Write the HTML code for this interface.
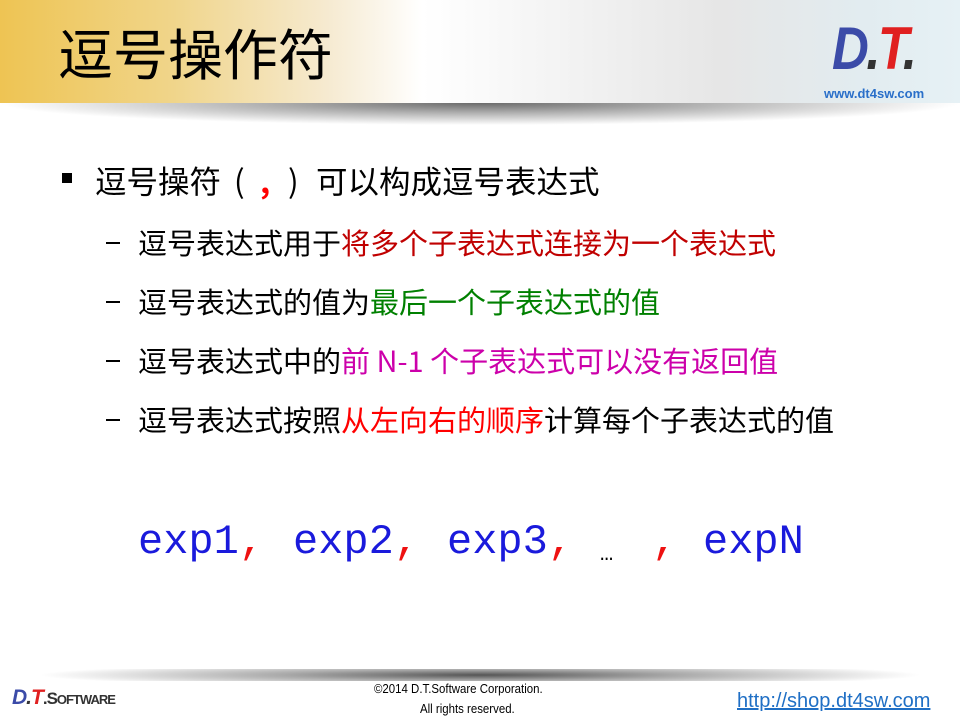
<!DOCTYPE html>
<html><head><meta charset="utf-8"><style>
*{margin:0;padding:0}
body{width:960px;height:720px;position:relative;background:#fff;overflow:hidden;font-family:"Liberation Sans","Noto Sans CJK SC",sans-serif}
.hdr{position:absolute;left:0;top:0;width:960px;height:103px;background:linear-gradient(90deg,#eec453 0%,#f0d58a 18%,#f6ead0 34%,#fff 44%,#f2f2f2 60%,#e6e6e6 75%,#e2ecf0 90%,#e6f1f5 100%)}
.shadow{position:absolute;left:0;top:103px;width:960px;height:22px;background:radial-gradient(ellipse 50% 100% at 50% 0%,#6a6a6a 0%,#b0b0b0 45%,rgba(255,255,255,0) 100%)}
.title{position:absolute;left:58px;top:16px;font-size:55px;color:#000;font-family:"Noto Sans CJK SC",sans-serif;line-height:70px}
.logo{position:absolute;left:832px;top:16px;font-size:60px;font-weight:bold;font-style:italic;line-height:66px;letter-spacing:-3px;transform:scaleX(0.85);transform-origin:left}
.url{position:absolute;left:824px;top:86px;font-size:13px;font-weight:bold;color:#2a6fc9}
.t{position:absolute;white-space:nowrap;font-family:"Noto Sans CJK SC",sans-serif;line-height:40px;color:#000}
.l1{font-size:31.5px;top:160px}
.sq{position:absolute;left:62px;top:173px;width:10px;height:10px;background:#000}
.s{left:138px;font-size:29px}
.d{position:absolute;left:106px;width:14px;height:2px;background:#000}
.c{position:absolute;top:517px;font-family:"Liberation Mono",monospace;font-size:42px;color:#1a1adc;white-space:pre;line-height:50px}
.r{color:#ee1111}
.fshadow{position:absolute;left:40px;top:669px;width:880px;height:12px;background:radial-gradient(ellipse 50% 100% at 50% 50%,#555 0%,#aaa 45%,rgba(255,255,255,0) 100%)}
</style></head><body>
<div class="hdr"></div>
<div class="shadow"></div>
<div class="title">逗号操作符</div>
<div class="logo"><span style="color:#3b4ba8">D</span><span style="color:#333">.</span><span style="color:#e02020">T</span><span style="color:#333">.</span></div>
<div class="url">www.dt4sw.com</div>

<div class="sq"></div>
<div class="t l1" style="left:95px">逗号操符</div>
<div class="t l1" style="left:234px">(</div>
<div class="t l1" style="left:260px;color:#ff0000;font-weight:bold">,</div>
<div class="t l1" style="left:288px">)</div>
<div class="t l1" style="left:316px">可以构成逗号表达式</div>

<div class="d" style="top:242px"></div>
<div class="t s" style="top:222px">逗号表达式用于<span style="color:#c00000">将多个子表达式连接为一个表达式</span></div>
<div class="d" style="top:301px"></div>
<div class="t s" style="top:281px">逗号表达式的值为<span style="color:#008000">最后一个子表达式的值</span></div>
<div class="d" style="top:360px"></div>
<div class="t s" style="top:340px">逗号表达式中的<span style="color:#cc00aa">前 N-1 个子表达式可以没有返回值</span></div>
<div class="d" style="top:419px"></div>
<div class="t s" style="top:399px">逗号表达式按照<span style="color:#ff0000">从左向右的顺序</span>计算每个子表达式的值</div>

<div class="c" style="left:138px">exp1<span class="r">,</span></div>
<div class="c" style="left:293px">exp2<span class="r">,</span></div>
<div class="c" style="left:447px">exp3<span class="r">,</span></div>
<div class="c" style="left:600px;color:#000;font-size:22px;top:530px">…</div>
<div class="c r" style="left:652px">,</div>
<div class="c" style="left:703px">expN</div>

<div class="fshadow"></div>
<div style="position:absolute;left:12px;top:686px;font-size:21px;font-weight:bold;font-style:italic;letter-spacing:-1px"><span style="color:#3b4ba8">D</span><span style="color:#333">.</span><span style="color:#e02020">T</span><span style="color:#333;font-style:normal;font-size:17px">.S<span style="font-size:13px">OFTWARE</span></span></div>
<div style="position:absolute;left:374px;top:681px;font-size:13px;color:#000;transform:scaleX(0.88);transform-origin:left">©2014 D.T.Software Corporation.</div>
<div style="position:absolute;left:420px;top:701px;font-size:13px;color:#000;transform:scaleX(0.88);transform-origin:left">All rights reserved.</div>
<div style="position:absolute;left:737px;top:690px;font-size:20px;color:#1f6fc5;text-decoration:underline">http://shop.dt4sw.com</div>
</body></html>
